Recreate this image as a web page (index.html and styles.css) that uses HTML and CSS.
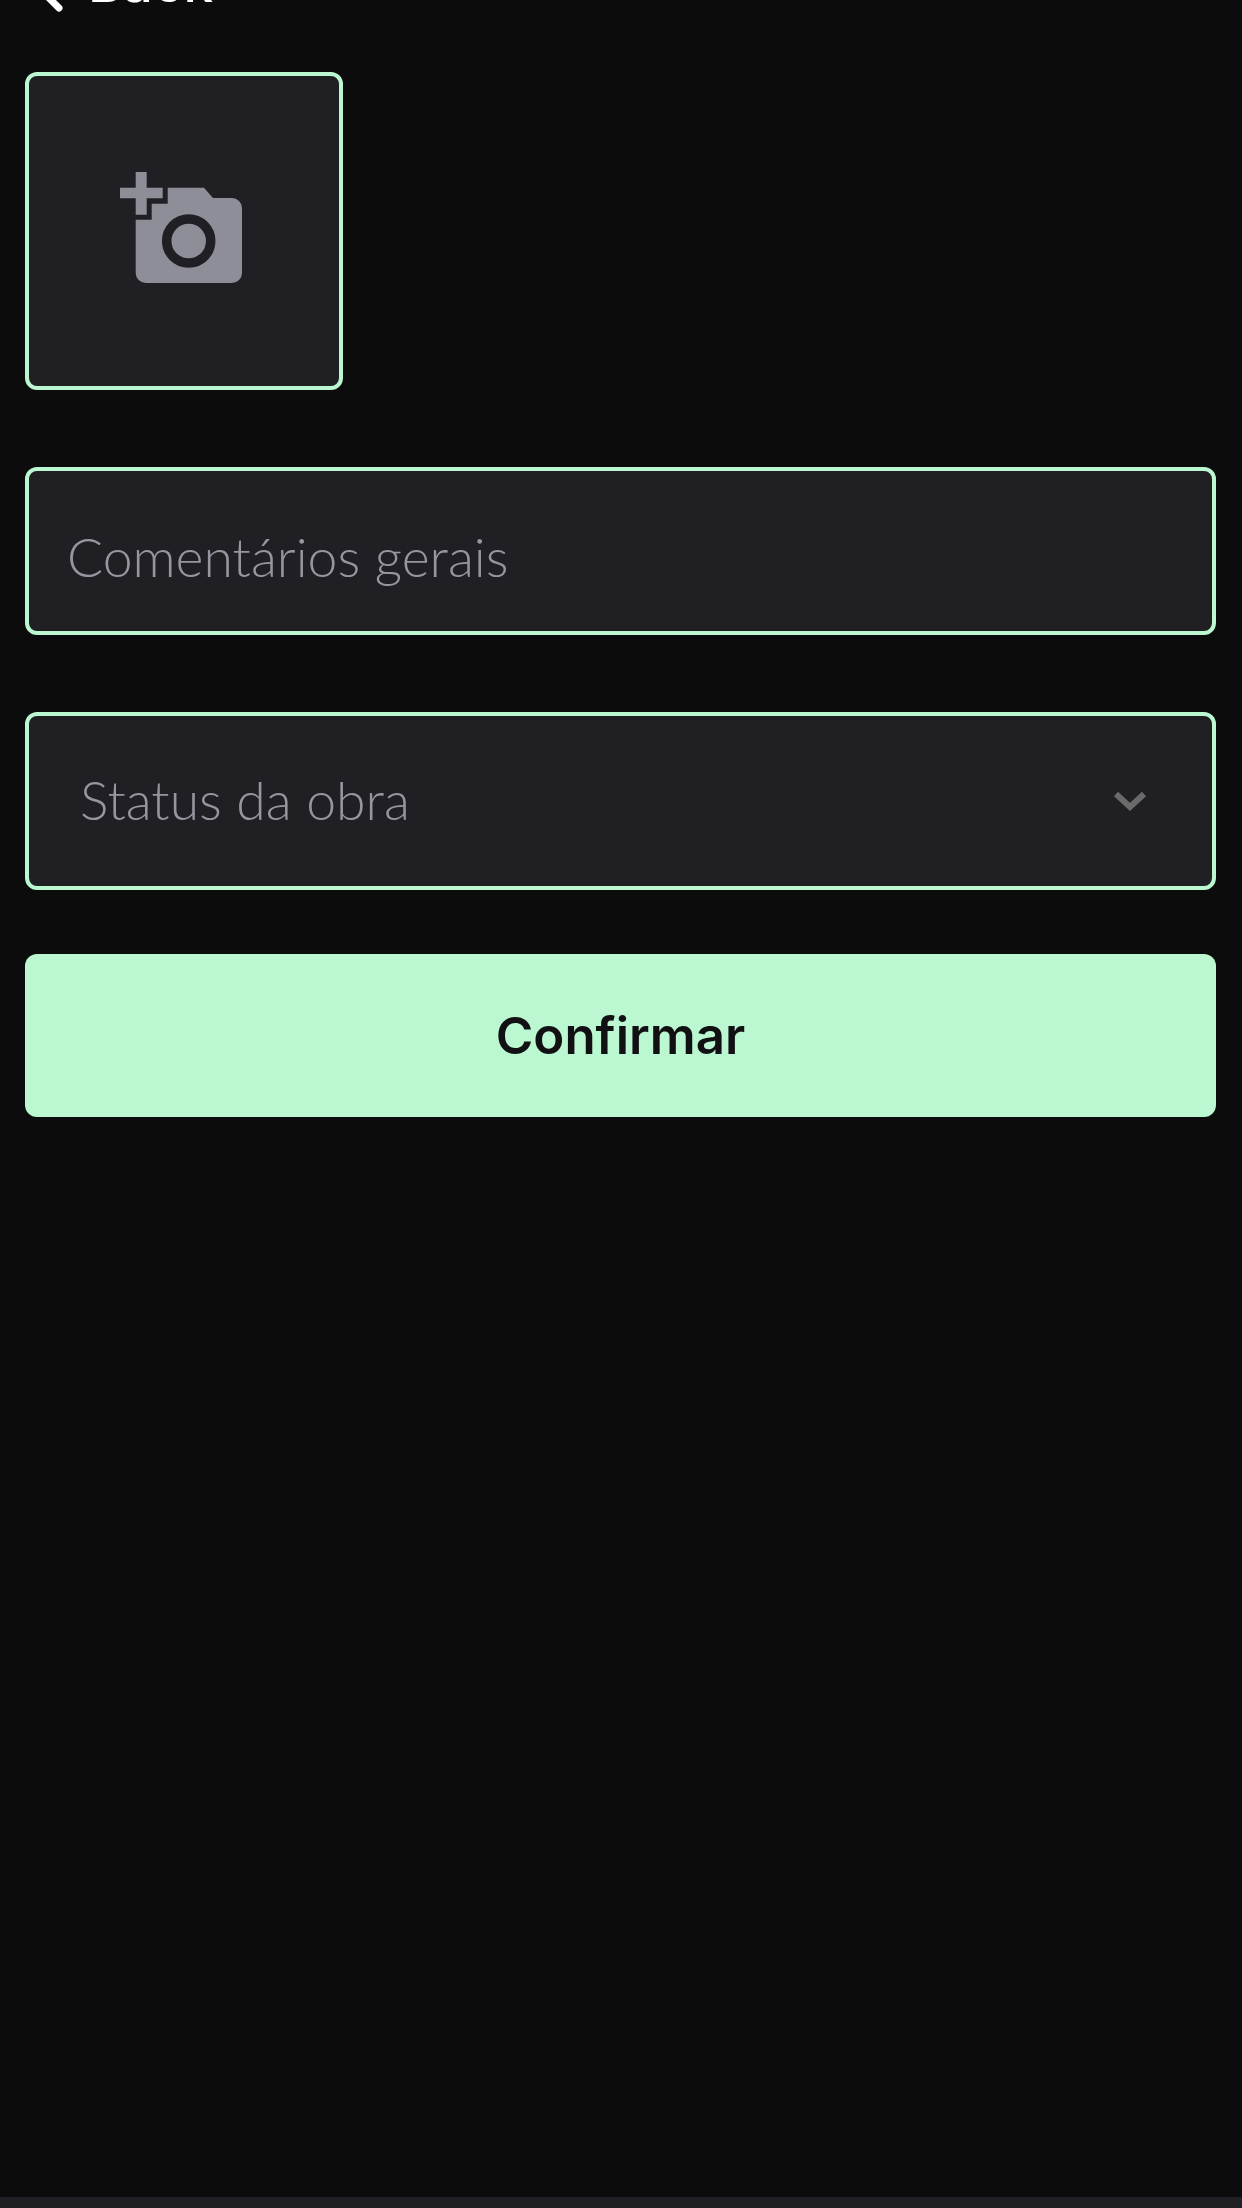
FILE: index.html
```html
<!DOCTYPE html>
<html lang="pt-BR">
<head>
    <meta charset="UTF-8">
    <meta name="viewport" content="width=device-width, initial-scale=1.0">
    <link rel="stylesheet" href="styles.css">
    <title>Status da obra</title>
</head>
<body>
    <div id="screen">
        <div class="top-bar">
            <div class="back">
                <svg class="back-icon" width="32" height="52" viewBox="0 0 32 52">
                    <path d="M26 3 L4 24 L26 46" fill="none" stroke="#fff" stroke-width="7" stroke-linecap="round" stroke-linejoin="round"/>
                </svg>
                <span class="back-label">Back</span>
            </div>
            <div class="top-title">Nova Visita de Obra</div>
        </div>

        <form class="form">
            <div class="photo-box">
                <svg width="122" height="111" viewBox="0 0 122 111">
                    <path fill="#8e8e99" d="M15.700 0h11v15.700h16v10.600h-16v16.400h-11V26.300H0V15.700h15.700z"/>
                    <path fill="#8e8e99" d="M47.700 15.700H84L93 26h19a10 10 0 0 1 10 10v65a10 10 0 0 1-10 10H25.700a10 10 0 0 1-10-10V47.700h16V31.700h16z"/>
                    <circle cx="68.700" cy="69" r="22" fill="#8e8e99" stroke="#202024" stroke-width="9.500"/>
                </svg>
            </div>

            <div class="field comments">Comentários gerais</div>

            <div class="field status">
                <span>Status da obra</span>
                <svg class="chevron" width="34" height="22" viewBox="0 0 34 22">
                    <path d="M3 4 L17 17 L31 4" fill="none" stroke="#6b6a6b" stroke-width="6"/>
                </svg>
            </div>

            <button type="button" class="confirm">Confirmar</button>
        </form>

        <div class="bottom-strip"></div>
    </div>
</body>
</html>
```

FILE: styles.css
```css
html, body {
    margin: 0;
    padding: 0;
    background-color: #0c0c0d;
}

#screen {
    width: 1242px;
    height: 2208px;
    display: flex;
    flex-direction: column;
    overflow: hidden;
    background-color: #0c0c0d;
}

/* only the lower edge of the header is on screen */
.top-bar {
    height: 110px;
    margin-top: -38px;
    flex-shrink: 0;
    display: flex;
    position: relative;
    justify-content: center;
    font-family: Inter, sans-serif;
    line-height: 52px;
    color: #fff;
}

.back {
    position: absolute;
    left: 33px;
    top: 0;
    display: flex;
    gap: 23px;
    font-size: 53px;
    font-weight: 500;
}

.back-label {
    margin-top: -5px;
}

.top-title {
    font-size: 46px;
    font-weight: 500;
    height: 52px;
    margin-top: -7px;
    padding-left: 28px;
}

.form {
    flex: 1;
    display: flex;
    flex-direction: column;
    align-items: stretch;
    padding: 0 26px 0 25px;
}

.photo-box {
    width: 318px;
    height: 318px;
    box-sizing: border-box;
    display: flex;
    justify-content: center;
    align-items: center;
    background-color: #202024;
    border: 4px solid #bbf7d0;
    border-radius: 12px;
    padding: 0 6px 8px 0;
}

.field {
    box-sizing: border-box;
    display: flex;
    align-items: center;
    background-color: #202024;
    border: 4px solid #bbf7d0;
    border-radius: 12px;
    font-family: Lato, sans-serif;
    font-weight: 300;
    font-size: 53.500px;
    color: #9696a1;
}

.comments {
    height: 168px;
    margin-top: 77px;
    padding: 10px 0 0 38px;
}

.status {
    height: 178px;
    margin-top: 77px;
    padding: 0 65px 4px 51px;
    justify-content: space-between;
}

.chevron {
    margin-top: 4px;
}

.confirm {
    height: 163px;
    margin-top: 64px;
    border: none;
    border-radius: 12px;
    background-color: #bbf7d0;
    color: #111114;
    font-family: Inter, sans-serif;
    font-weight: 600;
    font-size: 51px;
}

.bottom-strip {
    height: 11px;
    flex-shrink: 0;
    background-color: #202024;
}
```
